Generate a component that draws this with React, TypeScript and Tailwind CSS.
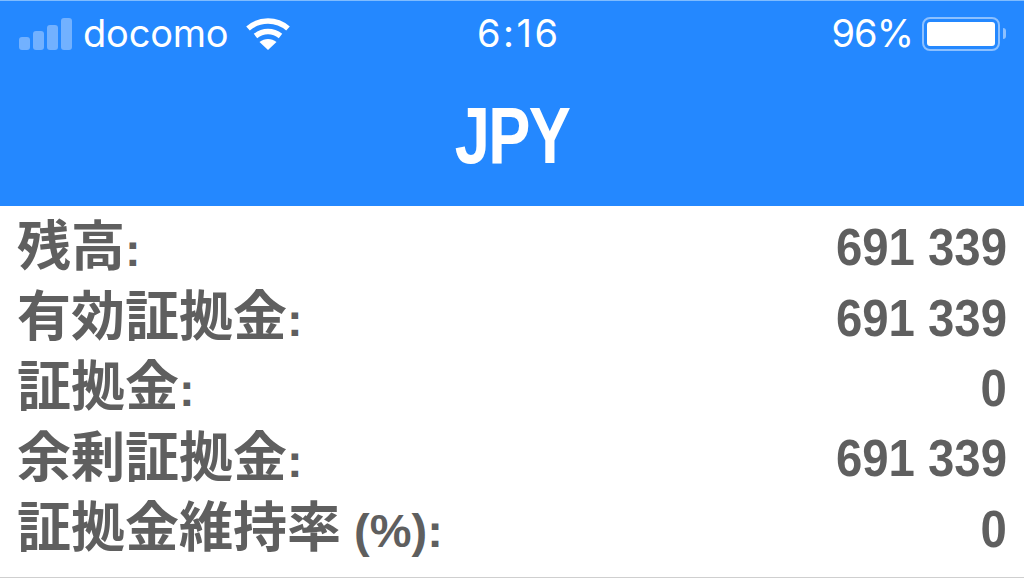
const rows = [
    { label: '残高', suffix: ':', value: '691 339' },
    { label: '有効証拠金', suffix: ':', value: '691 339' },
    { label: '証拠金', suffix: ':', value: '0' },
    { label: '余剰証拠金', suffix: ':', value: '691 339' },
    { label: '証拠金維持率', suffix: ' (%):', value: '0' },
];

function SignalBars() {
    return (
        <div className="flex items-end gap-[3px]">
            <div className="h-[13px] w-[11px] rounded-[3px] bg-[#72b1ff]" />
            <div className="h-[19px] w-[11px] rounded-[3px] bg-[#72b1ff]" />
            <div className="h-[25px] w-[11px] rounded-[3px] bg-[#72b1ff]" />
            <div className="h-[32px] w-[11px] rounded-[3px] bg-[#72b1ff]" />
        </div>
    );
}

function Wifi() {
    return (
        <svg width="46" height="34" viewBox="0 0 46 34" fill="none">
            <path d="M3 11.5C14.5 1.5 31.5 1.5 43 11.5" stroke="white" strokeWidth="5.5" />
            <path d="M10.5 19C18 13 28 13 35.5 19" stroke="white" strokeWidth="5.5" />
            <path d="M23 33L14.5 25C19.5 21 26.5 21 31.5 25Z" fill="white" />
        </svg>
    );
}

function Battery() {
    return (
        <div className="flex items-center gap-[3px]">
            <div className="flex h-[34px] w-[78px] items-center rounded-[8px] border-2 border-[#8cc0ff] p-[3px]">
                <div className="h-full w-full rounded-[3px] bg-white" />
            </div>
            <div className="h-[11px] w-[3px] rounded-r-[3px] bg-[#8cc0ff]" />
        </div>
    );
}

export default function App() {
    return (
        <div className="h-[583px] w-[1024px] overflow-hidden bg-white font-['Liberation_Sans','Noto_Sans_CJK_JP',sans-serif]">
            <header className="h-[206px] border-t-[1px] border-[#7fbcff] bg-[#2488ff] text-white">
                <div className="relative flex h-[65px] items-center justify-between pl-[19px] pr-[18px]">
                    <div className="flex items-center">
                        <SignalBars />
                        <span className="ml-[11px] font-['Inter',sans-serif] text-[38px] font-normal tracking-[-0.2px]">docomo</span>
                        <div className="ml-[17px]"><Wifi /></div>
                    </div>
                    <span className="absolute left-[477px] font-['Inter',sans-serif] text-[38px] font-normal tracking-[2.5px]">6:16</span>
                    <div className="flex items-center gap-[9px]">
                        <span className="font-['Inter',sans-serif] text-[38px] font-normal tracking-[-1px]">96%</span>
                        <Battery />
                    </div>
                </div>
                <h1 className="mt-[30px] text-center text-[80px] leading-[80px] font-bold tracking-[-2px] [transform:scaleX(0.79)]">JPY</h1>
            </header>
            <main className="border-b border-[#cfcfcf] pb-[13px] pt-[6px] pl-[17px] pr-[17px] text-[#5f5f5f]">
                {rows.map((row) => (
                    <div key={row.label} className="flex h-[70.4px] items-center justify-between text-[52px] font-bold">
                        <span className="whitespace-pre text-[54px] font-bold">{row.label}<span className="text-[47px]">{row.suffix}</span></span>
                        <span className="origin-right [transform:scaleX(0.91)]">{row.value}</span>
                    </div>
                ))}
            </main>
        </div>
    );
}
